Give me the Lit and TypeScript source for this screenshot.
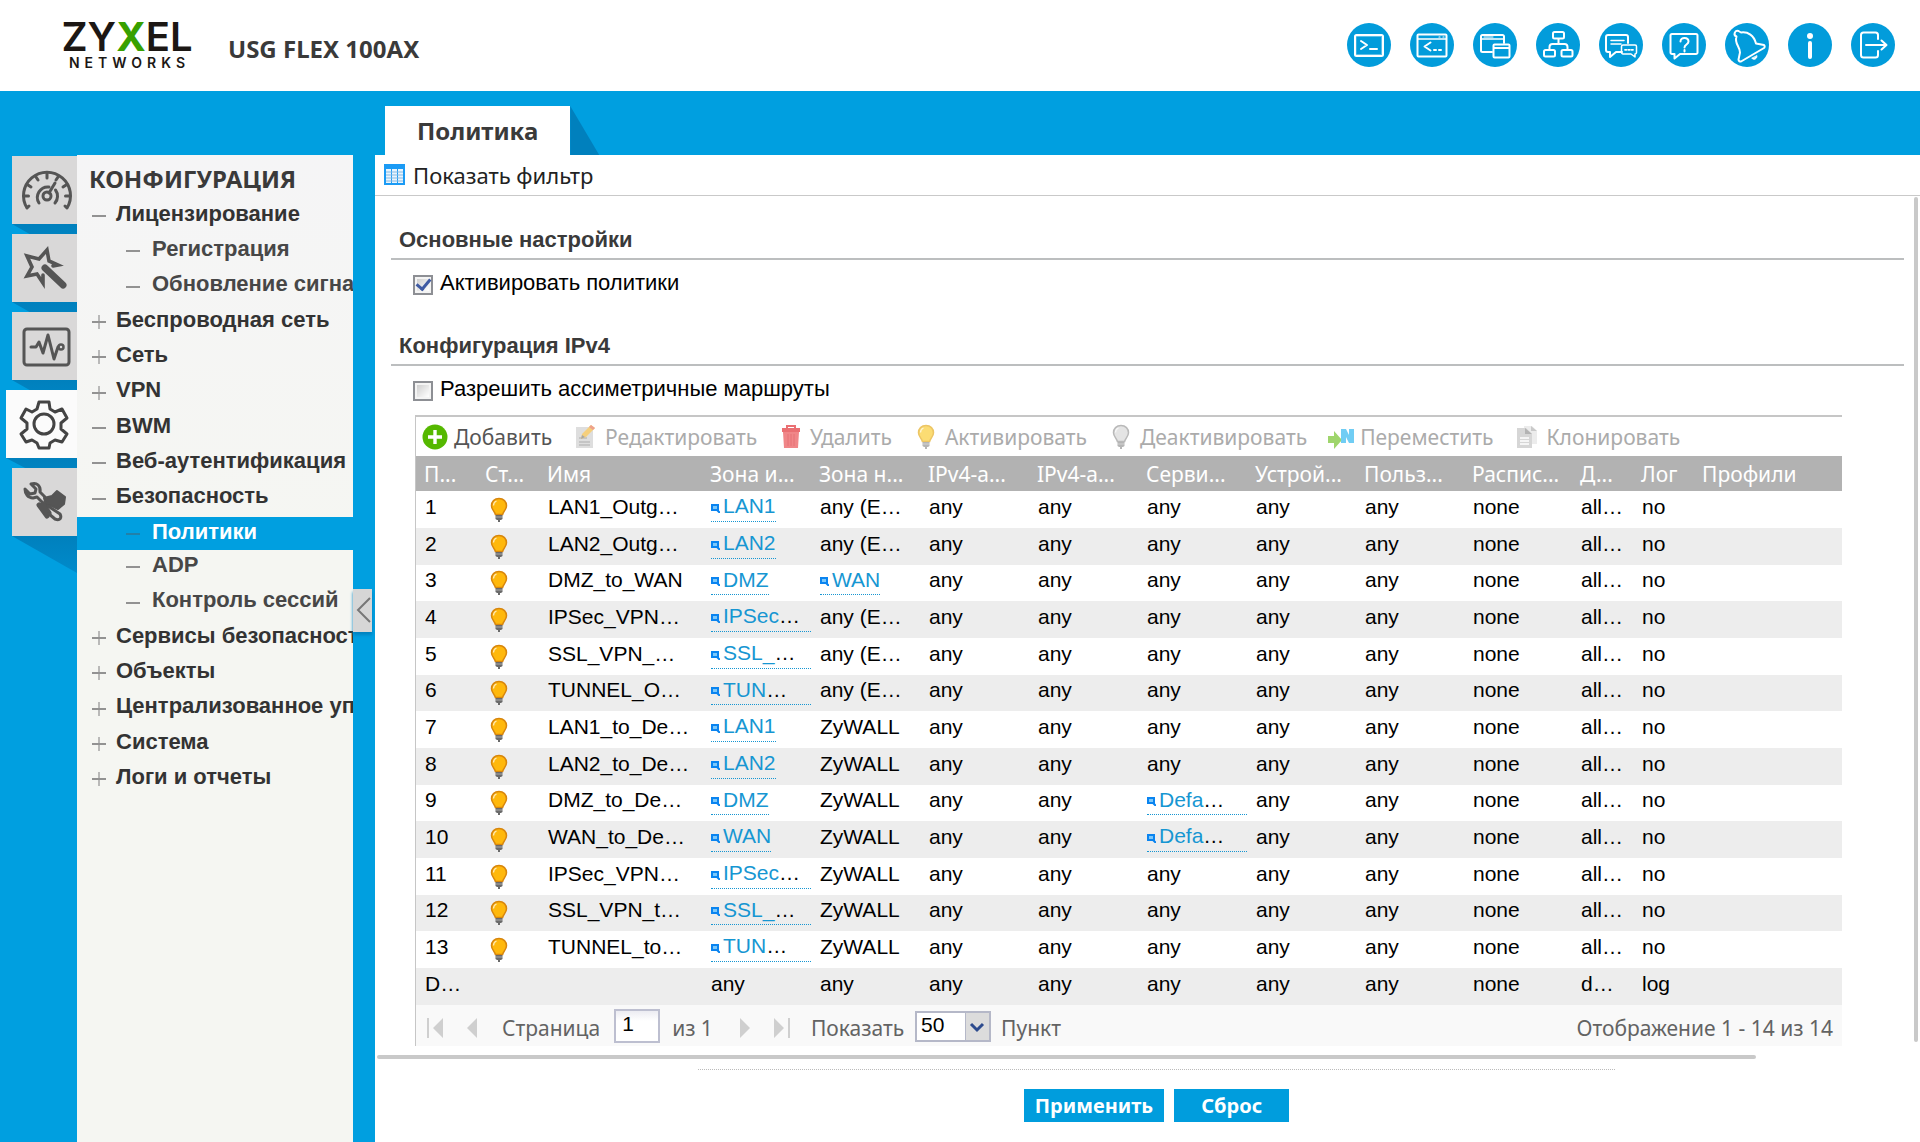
import { LitElement, html, svg, css, nothing } from "lit";
import { customElement } from "lit/decorators.js";
import { classMap } from "lit/directives/class-map.js";

interface MenuItem { label: string; mark: "plus" | "minus"; sub?: boolean; active?: boolean; }
interface Cell { text: string; link?: boolean; cut?: boolean; }

const menu: MenuItem[] = [
  { label: "Лицензирование", mark: "minus" },
  { label: "Регистрация", mark: "minus", sub: true },
  { label: "Обновление сигнатур", mark: "minus", sub: true },
  { label: "Беспроводная сеть", mark: "plus" },
  { label: "Сеть", mark: "plus" },
  { label: "VPN", mark: "plus" },
  { label: "BWM", mark: "minus" },
  { label: "Веб-аутентификация", mark: "minus" },
  { label: "Безопасность", mark: "minus" },
  { label: "Политики", mark: "minus", sub: true, active: true },
  { label: "ADP", mark: "minus", sub: true },
  { label: "Контроль сессий", mark: "minus", sub: true },
  { label: "Сервисы безопасности", mark: "plus" },
  { label: "Объекты", mark: "plus" },
  { label: "Централизованное управление", mark: "plus" },
  { label: "Система", mark: "plus" },
  { label: "Логи и отчеты", mark: "plus" },
];

const columns = ["П...", "Ст...", "Имя", "Зона и...", "Зона н...", "IPv4-а...", "IPv4-а...", "Серви...", "Устрой...", "Польз...", "Распис...", "Д...", "Лог", "Профили"];
const widths = ["w61", "w62", "w163", "w109", "w109", "w109", "w109", "w109", "w109", "w108", "w108", "w61", "w61", ""];

const zone = (text: string, cut = false): Cell => ({ text, link: true, cut });
const plain = (text: string): Cell => ({ text });
const rule = (n: string, name: string, from: Cell, to: Cell, service: Cell = plain("any"), action = "all…", log = "no"): Cell[] => [
  plain(n), plain(""), plain(name), from, to, plain("any"), plain("any"), service, plain("any"), plain("any"), plain("none"), plain(action), plain(log), plain(""),
];

const rows: Cell[][] = [
  rule("1", "LAN1_Outg…", zone("LAN1"), plain("any (E…")),
  rule("2", "LAN2_Outg…", zone("LAN2"), plain("any (E…")),
  rule("3", "DMZ_to_WAN", zone("DMZ"), zone("WAN")),
  rule("4", "IPSec_VPN…", zone("IPSec", true), plain("any (E…")),
  rule("5", "SSL_VPN_…", zone("SSL_", true), plain("any (E…")),
  rule("6", "TUNNEL_O…", zone("TUN", true), plain("any (E…")),
  rule("7", "LAN1_to_De…", zone("LAN1"), plain("ZyWALL")),
  rule("8", "LAN2_to_De…", zone("LAN2"), plain("ZyWALL")),
  rule("9", "DMZ_to_De…", zone("DMZ"), plain("ZyWALL"), zone("Defa", true)),
  rule("10", "WAN_to_De…", zone("WAN"), plain("ZyWALL"), zone("Defa", true)),
  rule("11", "IPSec_VPN…", zone("IPSec", true), plain("ZyWALL")),
  rule("12", "SSL_VPN_t…", zone("SSL_", true), plain("ZyWALL")),
  rule("13", "TUNNEL_to…", zone("TUN", true), plain("ZyWALL")),
  rule("D…", "", plain("any"), plain("any"), plain("any"), "d…", "log"),
];

const headerIcons = [
  { label: "Console", art: svg`<rect x="8" y="12" width="28" height="21" rx="1.5"/><rect x="9.500" y="13.500" width="25" height="18" stroke-width=".6" opacity=".6"/><path d="M14 18l6 4-6 4M23 26h7"/>` },
  { label: "CLI", art: svg`<rect x="7.500" y="11.500" width="29" height="22" rx="1"/><path d="M8 16h28" stroke-width="1.500"/><path d="M29 14h1M33 14h1" stroke-width="1.200"/><path d="M20.500 19.500l-6 4 6 4M24 27h2M29 27h2"/>` },
  { label: "Reference", art: svg`<path d="M19 29H9.500a1.500 1.500 0 0 1-1.500-1.500v-14A1.500 1.500 0 0 1 9.500 12h20a1.500 1.500 0 0 1 1.500 1.500V20"/><path d="M9 16h21" stroke-width="1.500"/><path d="M11 14h9" stroke-width="1"/><rect x="20.500" y="21.500" width="16" height="13" rx="1"/><path d="M21 25h15"/>` },
  { label: "Site map", art: svg`<rect x="17" y="9" width="11" height="6.500" rx="1.500"/><rect x="8" y="27" width="11" height="6.500" rx="1.500"/><rect x="25.500" y="27" width="11" height="6.500" rx="1.500"/><path d="M22.500 16v5M13.500 27v-3c0-2 1-3 3-3h12c2 0 3 1 3 3v3"/>` },
  { label: "Forum", art: svg`<path d="M29 20v-6a2 2 0 0 0-2-2H9a2 2 0 0 0-2 2v13a2 2 0 0 0 2 2h2v5l6-5h6"/><path d="M12 17.500h13M12 21h10" stroke-width="1.500"/><path d="M24 22h12a1.500 1.500 0 0 1 1.500 1.500v6a1.500 1.500 0 0 1-1.500 1.500v3l-4-3h-8a1.500 1.500 0 0 1-1.500-1.500v-6A1.500 1.500 0 0 1 24 22z" stroke-width="1.500"/><path d="M26 26.800h1.500M29.300 26.800h1.500M32.500 26.800h1.500" stroke-width="1.800"/>` },
  { label: "Help", art: svg`<path d="M10 11h24a1.500 1.500 0 0 1 1.500 1.500v17A1.500 1.500 0 0 1 34 31H18l-5.500 4.500V31H10a1.500 1.500 0 0 1-1.500-1.500v-17A1.500 1.500 0 0 1 10 11z"/><path d="M18.500 18.500c0-5 8-4.500 8 0 0 3-4 3-4 6M22.500 27v1.500"/>` },
  { label: "Notifications", art: svg`<path d="M11.500 13.500a2.500 2.500 0 0 1 2-5.500l2.500 1.500c7-1 13 3 15 11l8 1.500a2 2 0 0 1 0 3L16 38.500a2 2 0 0 1-2.500-2l1.500-7c0-6-6-9-3.500-16z"/><path d="M27 35.500a3 3 0 0 0 5-2.500z" fill="#fff" stroke-width="1"/>` },
  { label: "About", art: svg`<circle cx="22" cy="13" r="3" fill="#fff" stroke="none"/><path d="M22 20v14" stroke-width="4"/>` },
  { label: "Logout", art: svg`<path d="M27 16v-4a2.500 2.500 0 0 0-2.500-2.500h-12A2.500 2.500 0 0 0 10 12v20a2.500 2.500 0 0 0 2.500 2.500h12A2.500 2.500 0 0 0 27 32v-4"/><path d="M15 22h20M30.500 17.500L35.500 22l-5 4.500"/>` },
];

const railIcons = [
  { label: "Dashboard", art: svg`<path d="M17 50l-2 2A23.500 23.500 0 1 1 55 52l-2-2"/><path d="M35 18v4M24 21l2 3M46 21l-2 3M16 29l3 2M54 29l-3 2M12.500 40h4M57.500 40h-4" stroke-width="3"/><path d="M27 47a10.500 10.500 0 0 1 10-16M43.500 34a10.500 10.500 0 0 1-.5 13"/><circle cx="35" cy="40" r="4"/><path d="M37 37l6-10"/>` },
  { label: "Quick setup", art: svg`<path d="M41 32l5-1-9-4-2-11-8 9-12-3 5 11-5 9 10-2 4 6 2 3v-8" stroke-width="3.600" stroke-linejoin="miter"/><path d="M33 34l18 17" stroke-width="7"/>` },
  { label: "Monitor", art: svg`<rect x="12" y="17" width="45" height="36" rx="3"/><path d="M19 35h5l3-5 4 11 5-18 6 24 4-12" stroke-width="3"/><circle cx="49" cy="35" r="2.500" stroke-width="2.500"/>` },
  { label: "Configuration", art: svg`<path d="M33 12h10l1 7 5 3 7-3 5 9-6 5v6l6 5-5 8-7-2-5 3-1 5H33l-2-5-5-3-6 2-5-8 6-5v-6l-6-5 5-9 6 3 5-3z"/><circle cx="38" cy="34" r="10"/>` },
  { label: "Maintenance", art: svg`<path d="M19 16l5 5-1 4-5 1-5-5c0 5 3 9 8 9l4-1 5 5M19 16c6-2 10 2 9 8l5 5" stroke-width="3"/><path d="M32 30l8-2 5-5 8 6-1 7-6 5-6-3-6-1z" fill="currentColor" stroke-width="2"/><path d="M27 37l8 11M31 36l6 9" stroke-width="5"/><path d="M36 38l12 8c2 4 0 7-5 5l-6-5" stroke-width="3"/>` },
];

const bulb = (glass: string, edge: string, base: string) => svg`
  <path d="M13 1.500c-4.600 0-7.500 3.300-7.500 7.300 0 3.600 3.200 5.600 3.900 8.700h7.200c.7-3.100 3.900-5.100 3.900-8.700 0-4-2.900-7.300-7.500-7.300z" fill="${glass}" stroke="${edge}" stroke-width="1.500"/>
  <path d="M10.500 4c-2 .8-3 2.500-3 4.500" stroke="#fff" stroke-width="1.300" fill="none" opacity=".7"/>
  <path d="M9.500 18h7v4l-1.500 1h-1v2h-2v-2h-1l-1.500-1z" fill="${base}"/>
  <path d="M9.500 20h7" stroke="#fff" stroke-width=".7" opacity=".6"/>`;

const toolbar = [
  { label: "Добавить", on: true, art: svg`<circle cx="13" cy="13" r="12.500" fill="#55b800"/><path d="M13 6v14M6 13h14" stroke="#fff" stroke-width="3.400"/>` },
  { label: "Редактировать", art: svg`<path d="M3 3h17v21H3z" fill="#dedede"/><path d="M6 14h8M6 18h11M6 21h11" stroke="#bdbdbd" stroke-width="1.500"/><path d="M8 15l1-5L18 1l4 3-9 9z" fill="#f5cf7c"/><path d="M18 1l4 3-2 2-4-3z" fill="#eea18c"/><path d="M8 15l1-4 3 2z" fill="#a6a6a6"/>` },
  { label: "Удалить", art: svg`<path d="M4 4h18v4H4z" fill="#ea6f72"/><path d="M9 4V2h8v2" fill="none" stroke="#ea6f72" stroke-width="2"/><path d="M5 8h16l-1 16H6z" fill="#f08688"/><path d="M10 10v12M13 10v12M16 10v12" stroke="#e87679" stroke-width="1.200"/>` },
  { label: "Активировать", art: bulb("#fbdc73", "#ecc565", "#b5b5b5") },
  { label: "Деактивировать", art: bulb("#e4e4e4", "#b9b9b9", "#b5b5b5") },
  { label: "Переместить", art: svg`<path d="M0 12h6V7l8 9-8 9v-6H0z" fill="#9fd56c"/><path d="M13 5h5l3 6V5h5v14h-5l-3-6v6h-5z" fill="#70cdf4"/>` },
  { label: "Клонировать", art: svg`<path d="M9 2h8l5 5v13H9z" fill="#ececec"/><path d="M16 2l6 5h-6z" fill="#c9c9c9"/><path d="M2 4h9l6 6v14H2z" fill="#d6d6d6"/><path d="M10 4l7 6h-7z" fill="#b3b3b3"/><path d="M5 14h9M5 17h9M5 20h9" stroke="#fff" stroke-width="1.300"/>` },
];

@customElement("app-root")
export class AppRoot extends LitElement {
  static styles = css`
    :host { display: flex; flex-direction: column; min-height: 100vh; background: #009fe0; color: #3a3a3a; font: 21px/24px "Liberation Sans", sans-serif; }
    * { box-sizing: border-box; }
    button { font: inherit; color: inherit; border: 0; padding: 0; background: none; cursor: pointer; }
    a { color: inherit; text-decoration: none; }
    h1, h2, ul { margin: 0; padding: 0; }
    svg { display: block; flex: none; }
    .noto { font-family: "Noto Sans", sans-serif; }

    .top { display: flex; align-items: center; height: 91px; padding: 0 25px 2px 60px; background: #fff; }
    .logo { display: flex; flex-direction: column; align-items: center; width: 134px; color: #1c1714; }
    .brand { font: 600 40px/36px Inter, sans-serif; }
    .brand b { font-weight: 700; color: #38a000; }
    .tagline { font: 600 14px/16px Inter, sans-serif; letter-spacing: 5px; margin-right: -5px; }
    .model { margin-left: 34px; padding-top: 9px; font: 700 24px/32px "Noto Sans", sans-serif; }
    .tools { display: flex; gap: 19px; margin-left: auto; }
    .tool { width: 44px; height: 44px; border-radius: 50%; background: #029cdb; }
    .tool svg { fill: none; stroke: #fff; stroke-width: 2; stroke-linecap: round; stroke-linejoin: round; }

    .body { flex: 1; display: flex; }
    .rail { display: flex; flex-direction: column; gap: 10px; width: 77px; padding: 65px 0 0 12px; isolation: isolate; }
    .rail-button { position: relative; height: 68px; background: #d9d8d8; color: #555; }
    .rail-button.active { margin-left: -6px; background: #fbfbfb; color: #444; }
    .rail-button svg { fill: none; stroke: currentColor; stroke-width: 3; stroke-linecap: round; stroke-linejoin: round; }
    .rail-button::after { content: ""; position: absolute; z-index: -1; left: 0; right: 0; top: 100%; height: 37px; background: linear-gradient(#0080bd, #008bcb); clip-path: polygon(0 0, 100% 0, 100% 100%); }

    .side { width: 276px; margin-top: 64px; padding-top: 6px; overflow: hidden; background: linear-gradient(#f5f5f6, #f5f6f2 400px); }
    .side-title { padding-left: 12px; font: 700 24px/35px "Noto Sans", sans-serif; }
    .menu { list-style: none; }
    .entry { display: flex; align-items: center; gap: 10px; height: 35px; padding-left: 15px; white-space: nowrap; font-weight: bold; font-size: 22px; color: #333; }
    li:nth-child(3n) .entry { height: 36px; }
    .entry.sub { padding-left: 49px; gap: 12px; color: #474747; }
    .entry.active { height: 33px; margin: 3px 0 -3px; padding-bottom: 4px; background: #009fe0; color: #fff; }
    .mark { stroke: #929292; stroke-width: 2; margin-top: 5px; }
    .active .mark { stroke: #2280a8; }

    .fold { width: 22px; padding-top: 498px; }
    .fold-button { display: block; width: 19px; height: 43px; background: #d6d6d6; box-shadow: 0 3px 3px #0082bf; }
    .fold-button svg { fill: none; stroke: #777; stroke-width: 2; }

    .main { flex: 1; min-width: 0; display: flex; flex-direction: column; padding-top: 15px; }
    .tab { position: relative; align-self: flex-start; margin-left: 10px; padding: 9px 32px 8px; background: #fff; font: 700 24px/32px "Noto Sans", sans-serif; }
    .tab::after { content: ""; position: absolute; left: 100%; top: 0; bottom: 0; width: 29px; background: #0080bd; clip-path: polygon(0 0, 100% 100%, 0 100%); }
    .panel { flex: 1; display: flex; flex-direction: column; background: #fff; }
    .filter { display: flex; align-items: center; height: 41px; border-bottom: 1px solid #c9c9c9; color: #222; font-size: 22px; }
    .filter button { display: flex; align-items: center; gap: 8px; padding-left: 9px; }
    .scroll { display: flex; margin-top: 1px; }
    .sheet { flex: 1; min-width: 0; padding: 30px 10px 9px 16px; }
    .vbar { width: 4px; margin: 0 2px 13px 0; border-radius: 2px; background: #c9c9c9; }
    .hbar { height: 4px; margin: 0 164px 0 2px; border-radius: 2px; background: #c9c9c9; }
    .head { height: 33px; padding-left: 8px; border-bottom: 2px solid #bcbebf; font-size: 22px; line-height: 26px; font-weight: bold; }
    .option { display: flex; align-items: center; gap: 7px; height: 49px; padding-left: 22px; color: #000; font-size: 22px; }
    .option label { padding-bottom: 4px; }
    .option + .head { margin-top: 24px; }
    .check { appearance: none; flex: none; display: grid; place-items: center; width: 20px; height: 20px; margin: 0; border: 2px solid #8d8f94; background: linear-gradient(135deg, #cfcfcf, #fff) content-box, #f4f4f4; padding: 2px; }
    .check:checked::before { content: ""; width: 6px; height: 11px; margin-top: -3px; border: solid #3f5ba3; border-width: 0 3px 3px 0; transform: rotate(40deg); }

    .grid { margin: 0 62px 0 24px; border: solid #c6c6c6; border-width: 2px 0 0 1px; }
    .bar { display: flex; align-items: center; gap: 21px; height: 39px; padding-left: 6px; color: #ababab; }
    .bar button { display: flex; align-items: center; gap: 6px; white-space: nowrap; }
    .bar .on { color: #555; }
    table { width: 100%; table-layout: fixed; border-collapse: collapse; }
    th { height: 35px; padding: 0 0 0 8px; background: #b2b2b2; color: #fff; font: 21px/26px "Noto Sans", sans-serif; text-align: left; white-space: nowrap; }
    td { padding: 0 0 6px 9px; height: 37px; color: #000; white-space: nowrap; line-height: 24px; }
    tr:nth-child(3n) td { height: 36px; }
    tbody tr:nth-child(even) { background: #ededed; }
    .w61 { width: 61px; } .w62 { width: 62px; } .w163 { width: 163px; } .w108 { width: 108px; } .w109 { width: 109px; }
    .state { padding: 0 0 0 9px; }
    .ref { display: inline-flex; align-items: center; gap: 3px; height: 28px; border-bottom: 1px dotted #1696d2; vertical-align: top; margin-top: 2px; padding-bottom: 2px; }
    .ref.cut { display: flex; }
    .ref a { color: #1696d2; }
    .ref svg { margin-top: 4px; }
    .more { margin-left: -3px; }

    .pager { display: flex; align-items: center; height: 41px; padding: 4px 9px 0 10px; background: #f9f9f9; color: #636363; }
    .pager svg { fill: #cfcfcf; }
    .page { width: 46px; height: 34px; margin: 0 12px 3px 14px; padding: 0 0 5px 6px; border: 2px solid #bdbfd0; background: linear-gradient(#ececf2, #fff 10px); font: 21px/24px "Liberation Sans", sans-serif; color: #000; }
    .size { position: relative; margin: 0 10px 3px 11px; }
    .size select { appearance: none; display: block; width: 76px; height: 31px; padding: 0 0 5px 4px; border: 2px solid #b5b8c8; border-radius: 0; background: #fff; font: 21px/24px "Liberation Sans", sans-serif; color: #000; }
    .size svg { position: absolute; right: 0; top: 0; pointer-events: none; }
    .first { margin-left: 1px; } .prev { margin: 0 24px 0 23px; } .next { margin: 0 23px 0 26px; } .last { margin-right: 21px; }
    .total { margin-left: auto; }
    .foot { display: flex; flex-direction: column; align-items: center; margin-top: 10px; padding: 0 0 20px 18px; }
    .dots { width: 60%; border-top: 1px dotted #bbb; }
    .actions { display: flex; gap: 10px; margin-top: 19px; }
    .actions button { min-width: 115px; height: 33px; padding: 0 11px; background: #009ddd; color: #fff; font: 700 20px/28px "Noto Sans", sans-serif; }
  `;

  private cell(c: Cell, col: number, row: number) {
    if (col === 1) return html`<td class="state">${row < 13 ? html`<svg width="26" height="26" viewBox="0 0 26 26">${bulb("#ffb80c", "#d8860c", "#6a6a6a")}</svg>` : nothing}</td>`;
    if (!c.link) return html`<td>${c.text}</td>`;
    return html`<td><span class=${classMap({ ref: true, cut: !!c.cut })}><svg width="9" height="9" viewBox="0 0 9 9"><path d="M1 1h6v5H1z" fill="#7cc8fa" stroke="#0a84f0" stroke-width="2"/><path d="M6 6l3 3" stroke="#0a84f0" stroke-width="2"/></svg><a href="#">${c.text}</a>${c.cut ? html`<span class="more">…</span>` : nothing}</span></td>`;
  }

  render() {
    return html`
      <header class="top">
        <div class="logo"><span class="brand">ZY<b>X</b>EL</span><span class="tagline">NETWORKS</span></div>
        <div class="model">USG FLEX 100AX</div>
        <div class="tools">${headerIcons.map(i => html`<button class="tool" aria-label=${i.label}><svg width="44" height="44" viewBox="0 0 44 44">${i.art}</svg></button>`)}</div>
      </header>
      <div class="body">
        <div class="rail">${railIcons.map((i, n) => html`<button class=${classMap({ "rail-button": true, active: n === 3 })} aria-label=${i.label}><svg width="65" height="68" viewBox="0 0 65 68">${i.art}</svg></button>`)}</div>
        <nav class="side">
          <h1 class="side-title">КОНФИГУРАЦИЯ</h1>
          <ul class="menu">${menu.map(m => html`<li><a href="#" class=${classMap({ entry: true, sub: !!m.sub, active: !!m.active })}><svg class="mark" width="14" height="14" viewBox="0 0 14 14"><path d="M0 7h14"/>${m.mark === "plus" ? svg`<path d="M7 0v14" opacity=".6"/>` : nothing}</svg>${m.label}</a></li>`)}</ul>
        </nav>
        <div class="fold"><button class="fold-button" aria-label="Collapse"><svg width="19" height="43" viewBox="0 0 19 43"><path d="M17 9L5 21l12 12"/></svg></button></div>
        <main class="main">
          <div class="tab">Политика</div>
          <div class="panel">
            <div class="filter noto"><button><svg width="21" height="22" viewBox="0 0 21 22"><path d="M0 0h21v21H0z" fill="#1b9bf5"/><path d="M2 5h5v14H2zM8 5h5v14H8zM14 5h5v14h-5z" fill="#e9f4fd"/><path d="M2 8h17M2 11h17M2 14h17M2 17h17" stroke="#84b9e3" stroke-width="1"/></svg>Показать фильтр</button></div>
            <div class="scroll">
              <div class="sheet">
                <h2 class="head">Основные настройки</h2>
                <div class="option"><input class="check" type="checkbox" id="enable" checked><label for="enable">Активировать политики</label></div>
                <h2 class="head">Конфигурация IPv4</h2>
                <div class="option"><input class="check" type="checkbox" id="asym"><label for="asym">Разрешить ассиметричные маршруты</label></div>
                <div class="grid">
                  <div class="bar noto">${toolbar.map(t => html`<button class=${classMap({ on: !!t.on })}><svg width="26" height="26" viewBox="0 0 26 26">${t.art}</svg>${t.label}</button>`)}</div>
                  <table>
                    <colgroup>${widths.map(w => html`<col class=${w}>`)}</colgroup>
                    <thead><tr>${columns.map(c => html`<th>${c}</th>`)}</tr></thead>
                    <tbody>${rows.map((r, n) => html`<tr>${r.map((c, i) => this.cell(c, i, n))}</tr>`)}</tbody>
                  </table>
                  <div class="pager noto">
                    <button class="first" aria-label="First page"><svg width="17" height="20" viewBox="0 0 17 20"><path d="M0 0h2v20H0zM16 0v20L6 10z"/></svg></button>
                    <button class="prev" aria-label="Previous page"><svg width="11" height="20" viewBox="0 0 11 20"><path d="M10 0v20L0 10z"/></svg></button>
                    <label for="page">Страница</label><input class="page" id="page" type="text" value="1"><span>из 1</span>
                    <button class="next" aria-label="Next page"><svg width="11" height="20" viewBox="0 0 11 20"><path d="M1 0v20l10-10z"/></svg></button>
                    <button class="last" aria-label="Last page"><svg width="17" height="20" viewBox="0 0 17 20"><path d="M15 0h2v20h-2zM1 0v20l10-10z"/></svg></button>
                    <label for="size">Показать</label>
                    <span class="size"><select id="size"><option>50</option></select><svg width="26" height="31" viewBox="0 0 26 31"><path d="M0 2h24v27H0z" style="fill:#dcdcdc"/><path d="M0 1h1v29H0z" style="fill:#b5b8c8"/><path d="M6 13l6 6 6-6" style="fill:none;stroke:#2d4b8e;stroke-width:3"/></svg></span>
                    <span>Пункт</span><span class="total">Отображение 1 - 14 из 14</span>
                  </div>
                </div>
              </div>
              <div class="vbar"></div>
            </div>
            <div class="hbar"></div>
            <div class="foot"><div class="dots"></div><div class="actions"><button>Применить</button><button>Сброс</button></div></div>
          </div>
        </main>
      </div>`;
  }
}
